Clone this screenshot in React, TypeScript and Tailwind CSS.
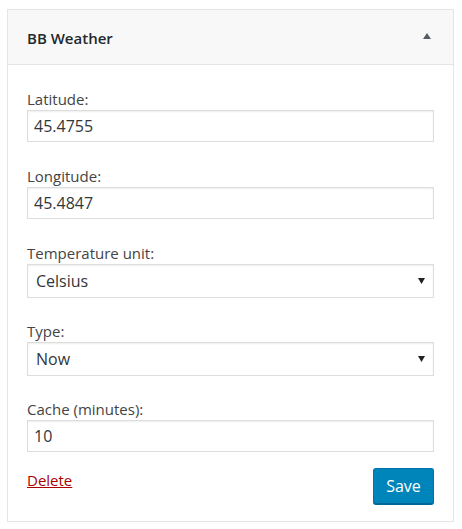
import React from "react";

const font = { fontFamily: '"Open Sans", "Noto Sans", "Liberation Sans", sans-serif' };

function Label({ children }: { children: React.ReactNode }) {
  return <label className="block h-[20px] text-[15px] leading-[20px] text-[#444]">{children}</label>;
}

function TextField({ label, value, last }: { label: string; value: string; last?: boolean }) {
  return (
    <div className={last ? "" : "mb-[24px]"}>
      <Label>{label}</Label>
      <input
        readOnly
        value={value}
        className="mt-[1px] block h-[32px] w-full border border-[#dddddd] bg-white px-[6px] text-[16px] text-[#32373c] shadow-[inset_0_1px_2px_rgba(0,0,0,0.07)] outline-none"
        style={font}
      />
    </div>
  );
}

function SelectField({ label, value }: { label: string; value: string }) {
  return (
    <div className="mb-[23px]">
      <Label>{label}</Label>
      <div className="relative mt-[1px]">
        <select
          value={value}
          onChange={() => {}}
          className="block h-[34px] w-full appearance-none border border-[#dddddd] bg-white pl-[8px] text-[16px] text-[#32373c] shadow-[inset_0_1px_2px_rgba(0,0,0,0.07)] outline-none"
          style={font}
        >
          <option>{value}</option>
        </select>
        <svg className="pointer-events-none absolute right-[9px] top-[14px]" width="7" height="6" viewBox="0 0 7 6">
          <polygon points="0,0 7,0 3.5,6" fill="#222" />
        </svg>
      </div>
    </div>
  );
}

export default function App() {
  return (
    <div className="h-[529px] w-[462px] bg-white pl-[7px] pt-[9px]" style={font}>
      <div className="w-[447px] border border-[#e5e5e5] bg-white">
        <div className="flex h-[55px] items-center justify-between border-b border-[#e5e5e5] bg-[#f8f8f8] pl-[19px] pr-[22px]">
          <span className="mt-[2px] text-[15px] font-semibold text-[#23282d]">BB Weather</span>
          <svg width="8" height="6" viewBox="0 0 8 6" className="mb-[3px]">
            <polygon points="0,6 8,6 4,0" fill="#555d66" />
          </svg>
        </div>
        <div className="px-[19px] pb-[17px] pt-[24px]">
          <TextField label="Latitude:" value="45.4755" />
          <TextField label="Longitude:" value="45.4847" />
          <SelectField label="Temperature unit:" value="Celsius" />
          <SelectField label="Type:" value="Now" />
          <TextField label="Cache (minutes):" value="10" last />
          <div className="mt-[16px] flex items-start justify-between">
            <a href="#" className="mt-[2px] text-[15px] leading-[20px] text-[#a00] underline">
              Delete
            </a>
            <button className="h-[36px] w-[61px] rounded-[3px] border border-[#0073aa] border-b-[#006799] bg-[#0085ba] text-[16px] text-white shadow-[0_1px_0_#006799]">
              Save
            </button>
          </div>
        </div>
      </div>
    </div>
  );
}
